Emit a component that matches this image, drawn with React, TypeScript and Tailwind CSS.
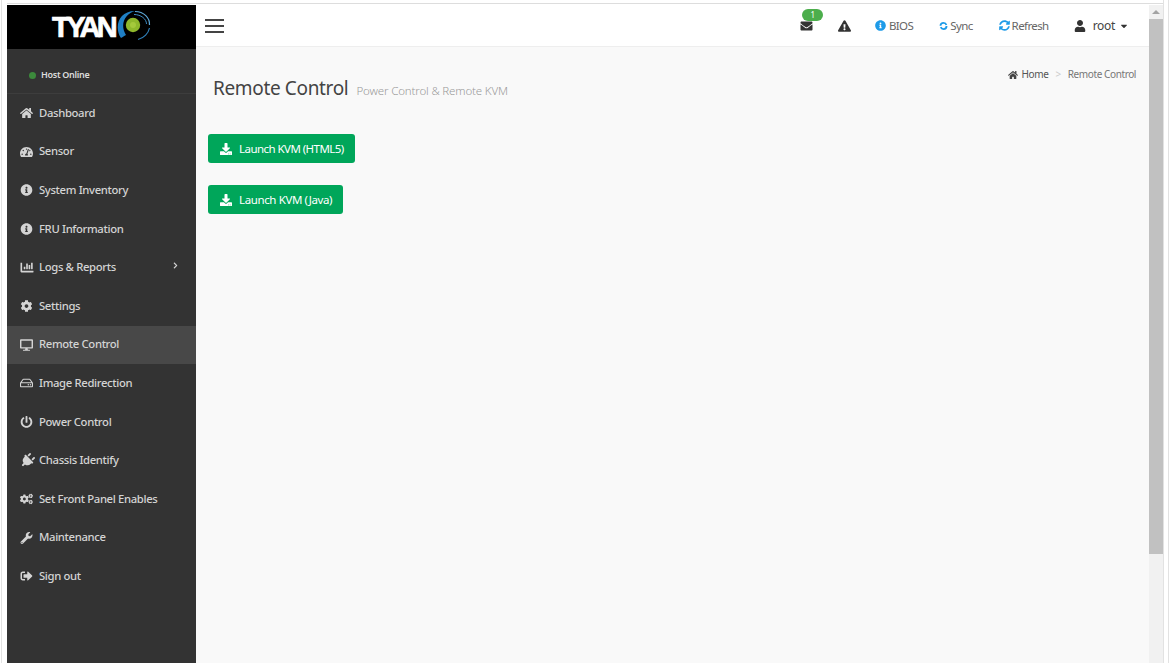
// BMC remote control page: dark sidebar, top bar, two launch buttons
import type { ComponentType } from "react";
import {
  FaHome,
  FaTachometerAlt,
  FaInfoCircle,
  FaChartBar,
  FaCog,
  FaDesktop,
  FaRegHdd,
  FaPowerOff,
  FaPlug,
  FaCogs,
  FaWrench,
  FaSignOutAlt,
  FaEnvelope,
  FaExclamationTriangle,
  FaSyncAlt,
  FaUser,
  FaDownload,
  FaChevronRight,
  FaCaretDown,
} from "react-icons/fa";

type NavItem = {
  label: string;
  icon: ComponentType<{ className?: string }>;
  active?: boolean;
  more?: boolean;
  iconClass?: string;
};

const NAV: NavItem[] = [
  { label: "Dashboard", icon: FaHome },
  { label: "Sensor", icon: FaTachometerAlt },
  { label: "System Inventory", icon: FaInfoCircle },
  { label: "FRU Information", icon: FaInfoCircle },
  { label: "Logs & Reports", icon: FaChartBar, more: true, iconClass: "h-[13px] w-[14px]" },
  { label: "Settings", icon: FaCog },
  { label: "Remote Control", icon: FaDesktop, active: true },
  { label: "Image Redirection", icon: FaRegHdd },
  { label: "Power Control", icon: FaPowerOff },
  { label: "Chassis Identify", icon: FaPlug, iconClass: "h-[15px] w-[15px] rotate-45" },
  { label: "Set Front Panel Enables", icon: FaCogs },
  { label: "Maintenance", icon: FaWrench },
  { label: "Sign out", icon: FaSignOutAlt },
];

const FONT = "font-['Source_Sans_Pro','Noto_Sans',sans-serif]";

function Logo() {
  return (
    <div className="flex h-[44px] items-center bg-black pl-[45px]">
      <span className="font-['Liberation_Sans',sans-serif] text-[29px] leading-none font-bold tracking-[-3.5px] text-white [-webkit-text-stroke:0.7px_white]">
        TYAN
      </span>
      <svg width="34" height="32" viewBox="0 0 34 32" className="ml-[3px] -translate-y-[1px]">
        <circle cx="16" cy="15" r="7.2" fill="#8fb82c" />
        <circle cx="16" cy="15" r="3" fill="#a5c93c" />
        <path d="M4 28C-3 18 1 1 18 1C9 3 2 14 9 25C7 26 6 27 4 28Z" fill="#1f7fc4" />
        <path d="M18 1.5C27 1.5 33 8 32.5 15" fill="none" stroke="#5fa9d8" strokeWidth="1.2" />
        <path d="M17 4.5C24 4.5 29.5 9 29.5 14" fill="none" stroke="#3d8cc4" strokeWidth="1" />
        <path d="M21 29.5C27 28 31.5 23 32.5 18" fill="none" stroke="#2f7fb8" strokeWidth="1.2" />
      </svg>
    </div>
  );
}

function Sidebar() {
  return (
    <aside className="flex w-[189px] shrink-0 flex-col bg-[#333333]">
      <Logo />
      <div className="flex h-[45px] items-center gap-[5px] border-b border-[#3d3d3d] pt-[8px] pl-[22px]">
        <span className="h-[7px] w-[7px] rounded-full bg-[#3c8a3c]" />
        <span className="text-[9px] font-semibold tracking-[-0.3px] text-[#dddddd]">Host Online</span>
      </div>
      <nav>
        {NAV.map((item) => (
          <div
            key={item.label}
            className={`relative flex h-[38.6px] items-center pl-[13px] text-[#d4d4d4] ${item.active ? "bg-[#484848]" : ""}`}
          >
            <span className="flex w-[19px] justify-start">
              <item.icon className={item.iconClass ?? "h-[12px] w-[13px]"} />
            </span>
            <span className="text-[11.3px] font-medium tracking-[-0.35px]">{item.label}</span>
            {item.more && <FaChevronRight className="absolute top-[14px] left-[165px] h-[7px] w-[7px]" />}
          </div>
        ))}
      </nav>
    </aside>
  );
}

function SyncIcon() {
  return (
    <svg width="9" height="10" viewBox="0 0 10 10" className="mr-[2px]">
      <circle cx="5" cy="5" r="3.4" fill="none" stroke="#1e9be8" strokeWidth="2" strokeDasharray="9 1.7" />
    </svg>
  );
}

function Topbar() {
  return (
    <header className="flex h-[42px] shrink-0 items-center justify-between border-b border-[#eeeeee] bg-white pr-[21px] pl-[9px] text-[11.5px] tracking-[-0.6px] text-[#666666]">
      <div className="flex w-[19px] flex-col gap-[4px]">
        <span className="h-[2px] bg-[#444444]" />
        <span className="h-[2px] bg-[#444444]" />
        <span className="h-[2px] bg-[#444444]" />
      </div>
      <div className="flex items-center">
        <span className="relative mr-[25px]">
          <FaEnvelope className="h-[12px] w-[13px] text-[#333333]" />
          <span className="absolute -top-[11px] left-[2px] flex h-[12px] w-[21px] items-center justify-center rounded-full bg-[#4cae4c] text-[8px] text-white">
            1
          </span>
        </span>
        <FaExclamationTriangle className="mr-[24px] h-[12px] w-[13px] text-[#333333]" />
        <FaInfoCircle className="mr-[3px] h-[11px] w-[11px] text-[#1e9be8]" />
        <span className="mr-[26px]">BIOS</span>
        <SyncIcon />
        <span className="mr-[26px]">Sync</span>
        <FaSyncAlt className="mr-[2px] h-[11px] w-[11px] text-[#1e9be8]" />
        <span className="mr-[25px]">Refresh</span>
        <FaUser className="mr-[7px] h-[12px] w-[12px] text-[#333333]" />
        <span className="mr-[5px] text-[12px] tracking-[-0.3px] text-[#444444]">root</span>
        <FaCaretDown className="h-[10px] w-[8px] text-[#333333]" />
      </div>
    </header>
  );
}

function LaunchButton({ label, tracking }: { label: string; tracking: string }) {
  return (
    <button
      type="button"
      className={`flex h-[29px] w-fit items-center gap-[7px] rounded-[3px] bg-[#00a65a] pr-[11px] pl-[12px] text-[11.5px] text-white ${tracking}`}
    >
      <FaDownload className="h-[12px] w-[12px]" />
      {label}
    </button>
  );
}

function Main() {
  return (
    <main className="relative flex min-w-0 flex-1 flex-col">
      <Topbar />
      <div className="flex-1 bg-[#f9f9f9] pl-[12px]">
        <div className="flex items-baseline pt-[28px] pl-[5px]">
          <h1 className="text-[19px] leading-[27px] tracking-[-0.35px] text-[#444444]">Remote Control</h1>
          <span className="ml-[8px] text-[11.5px] font-light tracking-[-0.15px] text-[#999999]">
            Power Control &amp; Remote KVM
          </span>
        </div>
        <div className="absolute top-[62px] right-[13px] flex items-center text-[10px] tracking-[-0.4px] text-[#777777]">
          <FaHome className="mr-[4px] h-[10px] w-[10px] text-[#444444]" />
          <span className="text-[#555555]">Home</span>
          <span className="mx-[7px] text-[#cccccc]">&gt;</span>
          <span>Remote Control</span>
        </div>
        <div className="mt-[32px] flex flex-col gap-[22px]">
          <LaunchButton label="Launch KVM (HTML5)" tracking="tracking-[-0.55px]" />
          <LaunchButton label="Launch KVM (Java)" tracking="tracking-[-0.38px]" />
        </div>
      </div>
    </main>
  );
}

function Scrollbar() {
  return (
    <div className="flex w-[14px] shrink-0 flex-col bg-[#f1f1f1]">
      <div className="flex h-[14px] items-center justify-center">
        <span className="h-0 w-0 border-x-[4px] border-b-[4px] border-x-transparent border-b-[#a3a3a3]" />
      </div>
      <div className="h-[535px] bg-[#c1c1c1]" />
    </div>
  );
}

export default function App() {
  return (
    <div className={`flex h-screen w-full overflow-hidden bg-white ${FONT}`}>
      <div className="ml-[1px] w-[6px] shrink-0 border-l border-[#e2e2e2]" />
      <div className="flex min-w-0 flex-1 flex-col">
        <div className="h-[3px] shrink-0 bg-white" />
        <div className="h-[1px] shrink-0 bg-[#dddddd]" />
        <div className="h-[1px] shrink-0 bg-white" />
        <div className="flex min-h-0 flex-1">
          <Sidebar />
          <Main />
          <Scrollbar />
        </div>
      </div>
      <div className="mr-[1px] w-[6px] shrink-0 border-x border-[#e2e2e2]" />
    </div>
  );
}
